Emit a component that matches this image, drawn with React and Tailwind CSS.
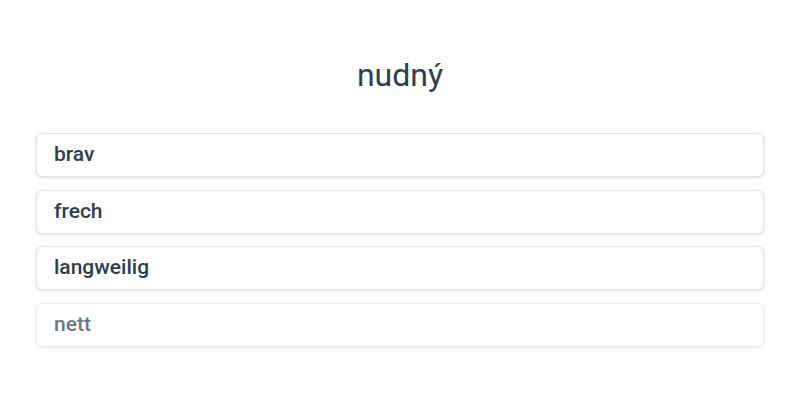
const options = ["brav", "frech", "langweilig", "nett"];

export default function App() {
  return (
    <div className="w-[800px] h-[400px] bg-white text-[#2c3e50] font-['Roboto',sans-serif] px-[36px] pt-[51px]">
      <h1 className="text-center text-[32px] leading-[48px] font-normal">nudný</h1>
      <div className="mt-[34px] flex flex-col gap-[12.5px]">
        {options.map((opt, idx) => (
          <div
            key={opt}
            className={`h-[44px] flex items-center px-[17px] rounded-[6px] bg-white border border-[#e4e4e4] shadow-[0_1px_3px_rgba(0,0,0,0.12)] text-[21px] font-medium ${idx === 3 ? "opacity-70" : ""}`}
          >
            {opt}
          </div>
        ))}
      </div>
    </div>
  );
}
